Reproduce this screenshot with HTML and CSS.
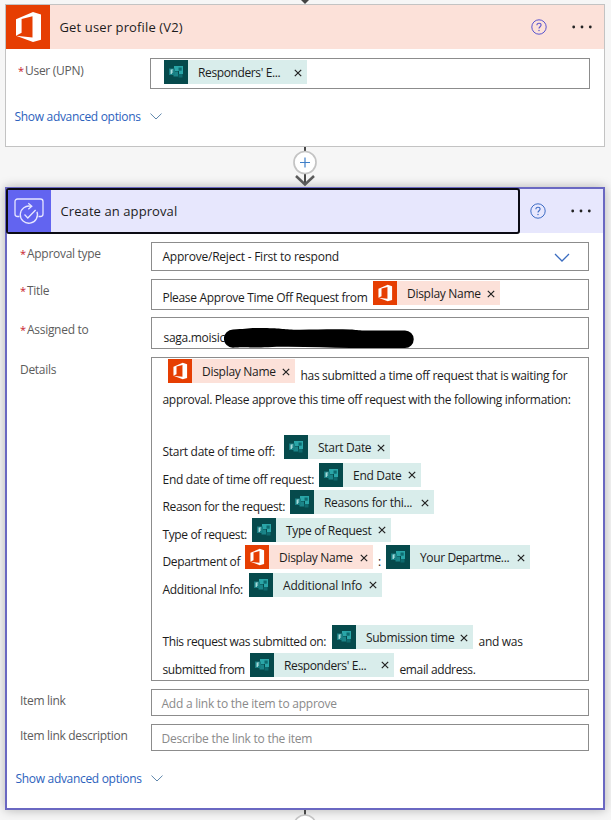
FILE: index.html
```html
<!DOCTYPE html>
<html lang="en">
<head>
<meta charset="utf-8">
<title>Flow</title>
<link rel="stylesheet" href="styles.css">
</head>
<body>
<svg class="defs" width="0" height="0" aria-hidden="true">
  <symbol id="office" viewBox="0 0 44 44">
    <path d="M10 14.2 27 7l8 2.5v25.2L27 37 10 30.8l.2-.1 16.3 1.9V11.2L15.6 13.9v13.9L10 30.7z" fill="#fff"/>
  </symbol>
  <symbol id="forms" viewBox="0 0 24 24">
    <path d="M10 6h9v8h-4v-3h-5z" fill="#2aa6a8"/>
    <rect x="14.5" y="7.5" width="3.2" height="3.2" fill="#0d6c70"/>
    <rect x="9.500" y="11.500" width="4.500" height="5" fill="#1b8589"/>
    <rect x="14.500" y="14" width="4" height="3.500" fill="#0e6a6e"/>
    <rect x="5" y="8.500" width="6" height="6.500" fill="#177f83"/>
    <path d="M6.600 9.500h2.600v1H7.800v1h1.300v1H7.800V14H6.600z" fill="#b9e6e6"/>
  </symbol>
  <symbol id="x" viewBox="0 0 8 8"><path d="M.8.8 7.200 7.200M7.200.8.8 7.200" fill="none" stroke="#222" stroke-width="1.200"/></symbol>
  <symbol id="help" viewBox="0 0 16 16">
    <circle cx="8" cy="8" r="7.200" fill="none" stroke="currentColor"/>
    <path d="M5.900 6.200C5.900 4.800 6.800 4.200 8 4.200s2.100.7 2.100 1.900c0 1.600-2.100 1.700-2.100 3.500" fill="none" stroke="currentColor" stroke-width="1.100"/>
    <rect x="7.400" y="10.900" width="1.200" height="1.200" fill="currentColor"/>
  </symbol>
  <symbol id="dots" viewBox="0 0 20 4"><g fill="#222"><circle cx="1.700" cy="2" r="1.400"/><circle cx="10" cy="2" r="1.400"/><circle cx="18.300" cy="2" r="1.400"/></g></symbol>
  <symbol id="chev" viewBox="0 0 12 7"><path d="M.5.600 6 6 11.500.600" fill="none" stroke="currentColor" stroke-width="1"/></symbol>
</svg>

<div class="lead"><svg width="10" height="4" viewBox="0 0 10 4"><path d="M1 0h8L5 4z" fill="#444"/></svg></div>

<section class="card">
  <header class="head peach">
    <span class="tile office"><svg width="44" height="44"><use href="#office"/></svg></span>
    <h2>Get user profile (V2)</h2>
    <svg class="help violet" width="16" height="16"><use href="#help"/></svg>
    <svg class="dots" width="20" height="4"><use href="#dots"/></svg>
  </header>
  <div class="row upn">
    <label><b>*</b>User (UPN)</label>
    <div class="box">
      <span class="chip teal w143"><i><svg width="24" height="24"><use href="#forms"/></svg></i><span class="tight">Responders' E...</span><svg class="x" width="8" height="8"><use href="#x"/></svg></span>
    </div>
  </div>
  <a class="more">Show advanced options<svg width="12" height="7"><use href="#chev"/></svg></a>
</section>

<div class="link">
  <svg width="26" height="40" viewBox="0 0 26 40">
    <path d="M13 0v36" stroke="#484848" stroke-width="2"/>
    <path d="M4 29l9 8.500L22 29" fill="none" stroke="#5a5a5a" stroke-width="2.500"/>
    <circle cx="13" cy="15.500" r="11" fill="#fff" stroke="#c4c4c4" stroke-width="1.700"/>
    <path d="M8 15.500h10M13 10.500v10" stroke="#3f7fc8" stroke-width="1.200"/>
  </svg>
</div>

<section class="card active">
  <header class="head lilac">
    <div class="focus">
      <span class="tile approve">
        <svg width="43" height="42" viewBox="0 0 43 42" fill="none" stroke="#e6e6ff" stroke-width="1.300">
          <path d="M11.500 26.500H9.500a2.500 2.500 0 0 1-2.500-2.500V11.500A2.500 2.500 0 0 1 9.500 9h23a2.500 2.500 0 0 1 2.500 2.500V24a2.500 2.500 0 0 1-2.500 2.500h-2"/>
          <path d="M23 16.300a8.600 8.600 0 1 0 6 5.500"/>
          <path d="M20.300 13.300l3.500 3-3.500 3"/>
          <path d="M16.500 24.500l3.300 3.500 7.800-8"/>
        </svg>
      </span>
      <h2>Create an approval</h2>
    </div>
    <svg class="help blue" width="16" height="16"><use href="#help"/></svg>
    <svg class="dots" width="20" height="4"><use href="#dots"/></svg>
  </header>

  <div class="row type">
    <label><b>*</b>Approval type</label>
    <div class="box select"><span>Approve/Reject - First to respond</span><svg width="16" height="9" viewBox="0 0 16 9"><path d="M1 1l7 7 7-7" fill="none" stroke="#3a6cc0" stroke-width="1.300"/></svg></div>
  </div>
  <div class="row title">
    <label><b>*</b>Title</label>
    <div class="box"><span class="t w-title">Please Approve Time Off Request from</span><span class="chip peach w127"><i class="office"><svg width="24" height="24"><use href="#office"/></svg></i><span>Display Name</span><svg class="x" width="8" height="8"><use href="#x"/></svg></span></div>
  </div>
  <div class="row assigned">
    <label><b>*</b>Assigned to</label>
    <div class="box"><span class="t">saga.moisic</span>
      <svg class="marker" width="190" height="21" viewBox="0 0 190 21"><path d="M9 2.500C22 2 24 .800 40 1c18 .200 20 1.800 36 1.700 18-.200 35-.700 50-.200 6 .200 8 1 14 1h41a8.700 8.700 0 0 1 0 17.500h-55c-20 0-40-1.200-62-1.200-20 0-26 1-38 .700-8-.300-9 0-17 .200A9 9 0 0 1 9 2.500z"/></svg>
    </div>
  </div>
  <div class="row details">
    <label>Details</label>
    <div class="box editor">
      <div class="line first"><span class="chip peach w127"><i class="office"><svg width="24" height="24"><use href="#office"/></svg></i><span>Display Name</span><svg class="x" width="8" height="8"><use href="#x"/></svg></span><span class="t after snug">has submitted a time off request that is waiting for</span></div>
      <div class="line second"><span class="t snug">approval. Please approve this time off request with the following information:</span></div>
      <div class="line"><span class="t w-start">Start date of time off:</span><span class="chip teal w106"><i><svg width="24" height="24"><use href="#forms"/></svg></i><span>Start Date</span><svg class="x" width="8" height="8"><use href="#x"/></svg></span></div>
      <div class="line"><span class="t w-end">End date of time off request:</span><span class="chip teal w102"><i><svg width="24" height="24"><use href="#forms"/></svg></i><span>End Date</span><svg class="x" width="8" height="8"><use href="#x"/></svg></span></div>
      <div class="line"><span class="t tight w-reason">Reason for the request:</span><span class="chip teal w144"><i><svg width="24" height="24"><use href="#forms"/></svg></i><span>Reasons for thi...</span><svg class="x" width="8" height="8"><use href="#x"/></svg></span></div>
      <div class="line"><span class="t tight w-kind">Type of request:</span><span class="chip teal w139"><i><svg width="24" height="24"><use href="#forms"/></svg></i><span>Type of Request</span><svg class="x" width="8" height="8"><use href="#x"/></svg></span></div>
      <div class="line"><span class="t tight w-dept">Department of</span><span class="chip peach w128"><i class="office"><svg width="24" height="24"><use href="#office"/></svg></i><span>Display Name</span><svg class="x" width="8" height="8"><use href="#x"/></svg></span><span class="t colon">:</span><span class="chip teal w144"><i><svg width="24" height="24"><use href="#forms"/></svg></i><span class="tight">Your Departme...</span><svg class="x" width="8" height="8"><use href="#x"/></svg></span></div>
      <div class="line last-info"><span class="t w-info">Additional Info:</span><span class="chip teal w133"><i><svg width="24" height="24"><use href="#forms"/></svg></i><span class="loose">Additional Info</span><svg class="x" width="8" height="8"><use href="#x"/></svg></span></div>
      <div class="line"><span class="t tight w-sub">This request was submitted on:</span><span class="chip teal w141"><i><svg width="24" height="24"><use href="#forms"/></svg></i><span>Submission time</span><svg class="x" width="8" height="8"><use href="#x"/></svg></span><span class="t after">and was</span></div>
      <div class="line"><span class="t tight w-from">submitted from</span><span class="chip teal w144"><i><svg width="24" height="24"><use href="#forms"/></svg></i><span class="tight">Responders' E...</span><svg class="x" width="8" height="8"><use href="#x"/></svg></span><span class="t after tight">email address.</span></div>
    </div>
  </div>
  <div class="row plain">
    <label>Item link</label>
    <div class="box hint">Add a link to the item to approve</div>
  </div>
  <div class="row plain">
    <label>Item link description</label>
    <div class="box hint">Describe the link to the item</div>
  </div>
  <a class="more">Show advanced options<svg width="12" height="7"><use href="#chev"/></svg></a>
</section>

<div class="link tail">
  <svg width="26" height="10" viewBox="0 0 26 10">
    <path d="M13 0v5" stroke="#484848" stroke-width="2"/>
    <circle cx="13" cy="16" r="11" fill="#fff" stroke="#c4c4c4" stroke-width="1.700"/>
  </svg>
</div>
</body>
</html>
```
FILE: styles.css
```css
* { box-sizing: border-box; }

body {
  margin: 0;
  width: 611px;
  height: 820px;
  overflow: hidden;
  background: #f6f6f6;
  font: 12px/16px "Open Sans", "Noto Sans", sans-serif;
  letter-spacing: -0.29px;
  color: #1c1c1c;
}

svg { display: block; flex: none; }
.defs { position: absolute; }

.lead { height: 4px; padding-left: 300px; }

.card {
  width: 600px;
  height: 143px;
  margin-left: 5px;
  background: #fff;
  border: 1px solid #c3c3c3;
}

.card.active {
  height: 623px;
  border: 2px solid #6a68c2;
  box-shadow: 0 0 10px rgba(0, 0, 0, 0.28);
}

.head {
  display: flex;
  align-items: center;
  height: 44px;
}

.head h2 {
  margin: 0 auto 0 9.5px;
  font-size: 13px;
  font-weight: 400;
  letter-spacing: 0.13px;
}

.peach { background: #fce1d9; }
.teal { background: #d9edeb; }
.lilac { background: #e7e7fd; }
.office { background: #e63e02; }

.tile { width: 44px; height: 44px; }
.tile.approve { width: 43px; height: 42px; background: #6264f0; }

.focus {
  display: flex;
  align-items: center;
  width: 514px;
  height: 46px;
  margin: 0 10px 0 -1px;
  flex: none;
  border: 2px solid #0b0b14;
  border-radius: 3px;
  overflow: hidden;
}

.focus h2 { letter-spacing: 0.09px; }

.help { margin-right: 25px; }
.violet { color: #5a55cf; }
.blue { color: #3d6cc4; }
.dots { margin-right: 12px; }
.active .dots { margin-right: 0; }

.row {
  display: flex;
  align-items: flex-start;
  margin-bottom: 8px;
}

.row label {
  width: 132px;
  margin: 4px 0 0 12px;
  color: #5c5c5c;
  letter-spacing: -0.29px;
  white-space: nowrap;
}

.active .row label { margin-left: 13px; width: 131px; }
.plain label { letter-spacing: -0.32px; }

.row b {
  display: inline-block;
  width: 7px;
  font-size: 11px;
  font-weight: 400;
  color: #c8202c;
}

.box {
  position: relative;
  display: flex;
  align-items: flex-start;
  width: 438px;
  border: 1px solid #8c8c8c;
  background: #fff;
  white-space: nowrap;
}

.row.upn { margin: 9px 0 0; }
.upn .box { width: 440px; height: 31px; padding: 1px 0 0 13px; }
.row.upn label { margin-top: 5px; }

.more {
  display: flex;
  align-items: center;
  gap: 9px;
  margin: 20px 0 0 8.5px;
  color: #2c62bd;
  letter-spacing: -0.31px;
}

.more svg { margin-top: -1px; color: #5e86ab; }
.active .more { margin-top: 20px; margin-left: 8.5px; }

.link { height: 40px; padding-left: 292px; }
.link.tail { height: 10px; }

.row.type { margin-top: 9px; }
.select {
  justify-content: space-between;
  height: 29px;
  padding: 6px 18px 0 10.5px;
  letter-spacing: -0.23px;
}
.select svg { margin-top: 4px; }

.row.title { margin-bottom: 7px; }
.title .box { height: 31px; padding: 1px 0 0 10.5px; }
.title .t { margin-top: 9px; }
.assigned .box { height: 32px; padding: 3px 0 0 11.5px; }
.row.assigned label, .row.details label { margin-top: 5px; }

.marker { position: absolute; left: 72px; top: 9px; }

.chip {
  display: flex;
  align-items: center;
  flex: none;
  height: 24px;
  padding-right: 5.5px;
}

.chip i {
  width: 24px;
  height: 24px;
  margin-right: 10px;
  flex: none;
}
.chip > span { padding-top: 2px; }
.chip i:not(.office) { background: #064a4c; }
.chip .x { margin: 1px 0 0 auto; }

.w102 { width: 102px; }
.w106 { width: 106px; }
.w127 { width: 127px; }
.w128 { width: 128px; }
.w133 { width: 133px; }
.w139 { width: 139px; }
.w141 { width: 141px; }
.w143 { width: 143px; }
.w144 { width: 144px; }

.t { margin-top: 9px; flex: none; }
.tight { letter-spacing: -0.38px; }
.snug { letter-spacing: -0.31px; }
.loose { letter-spacing: -0.19px; }
.after { margin-left: 5.5px; }
.colon { width: 13px; padding-left: 5px; }

.w-title { width: 210.5px; letter-spacing: -0.32px; }
.w-start { width: 121.5px; }
.w-end { width: 156.5px; }
.w-reason { width: 127.5px; }
.w-kind { width: 89.5px; }
.w-dept { width: 82.5px; }
.w-info { width: 86.5px; }
.w-sub { width: 169.5px; }
.w-from { width: 87.5px; }

.editor {
  display: block;
  height: 324px;
  padding: 1px 0 0 10.5px;
}

.line {
  display: flex;
  align-items: flex-start;
  height: 27.5px;
}
.line.first { height: 24px; padding-left: 5.5px; }
.line.second { height: 52px; }
.line.last-info { height: 52.5px; }

.hint {
  height: 27px;
  padding: 6px 0 0 9.5px;
  color: #8a8a8a;
  letter-spacing: -0.24px;
}
```
